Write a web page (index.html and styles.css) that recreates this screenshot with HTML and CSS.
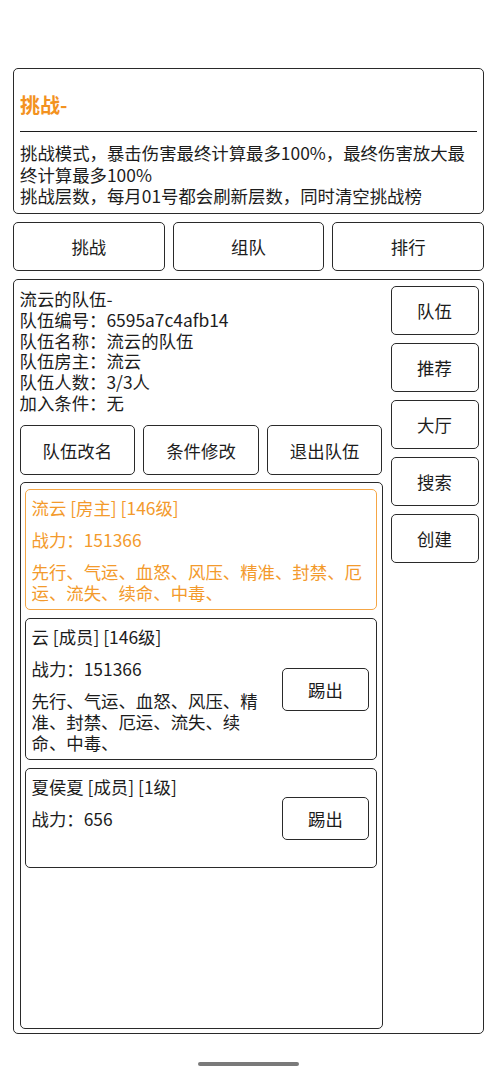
FILE: index.html
```html
<!DOCTYPE html>
<html lang="zh-CN">
<head>
<meta charset="utf-8">
<title>挑战</title>
<link rel="stylesheet" href="styles.css">
</head>
<body>
<div class="page">
  <section class="intro">
    <h1 class="intro-title">挑战-</h1>
    <div class="intro-rule"></div>
    <p class="intro-text">挑战模式，暴击伤害最终计算最多100%，最终伤害放大最终计算最多100%<br>挑战层数，每月01号都会刷新层数，同时清空挑战榜</p>
  </section>

  <nav class="tabs">
    <div class="btn tab">挑战</div>
    <div class="btn tab">组队</div>
    <div class="btn tab">排行</div>
  </nav>

  <section class="main">
    <div class="left">
      <p class="info">流云的队伍-<br>队伍编号：6595a7c4afb14<br>队伍名称：流云的队伍<br>队伍房主：流云<br>队伍人数：3/3人<br>加入条件：无</p>
      <div class="actions">
        <div class="btn action">队伍改名</div>
        <div class="btn action">条件修改</div>
        <div class="btn action">退出队伍</div>
      </div>
      <div class="list">
        <div class="card card-owner">
          <div class="card-body">
            <div class="line">流云 [房主] [146级]</div>
            <div class="line">战力：151366</div>
            <div class="line">先行、气运、血怒、风压、精准、封禁、厄运、流失、续命、中毒、</div>
          </div>
        </div>
        <div class="card">
          <div class="card-body narrow">
            <div class="line">云 [成员] [146级]</div>
            <div class="line">战力：151366</div>
            <div class="line">先行、气运、血怒、风压、精准、封禁、厄运、流失、续命、中毒、</div>
          </div>
          <div class="btn kick">踢出</div>
        </div>
        <div class="card">
          <div class="card-body narrow">
            <div class="line">夏侯夏 [成员] [1级]</div>
            <div class="line">战力：656</div>
            <div class="line empty"></div>
          </div>
          <div class="btn kick">踢出</div>
        </div>
      </div>
    </div>
    <div class="side">
      <div class="btn side-btn">队伍</div>
      <div class="btn side-btn">推荐</div>
      <div class="btn side-btn">大厅</div>
      <div class="btn side-btn">搜索</div>
      <div class="btn side-btn">创建</div>
    </div>
  </section>

  <div class="home-indicator"></div>
</div>
</body>
</html>
```

FILE: styles.css
```css
* {
  box-sizing: border-box;
}

html, body {
  margin: 0;
  padding: 0;
  background: #ffffff;
}

body {
  font-family: "Noto Sans CJK SC", "Noto Sans", sans-serif;
  font-size: 17.4px;
  color: #1c1c1c;
}

.page {
  padding: 68px 14px 0 13px;
}

.btn {
  border: 1.5px solid #2a2a2a;
  border-radius: 5px;
  display: flex;
  align-items: center;
  justify-content: center;
  background: #fff;
}

/* intro box */
.intro {
  border: 1.5px solid #2a2a2a;
  border-radius: 5px;
  padding: 0 6px 5px;
  height: 146px;
}

.intro-title {
  margin: 16px 0 0;
  height: 40px;
  line-height: 40px;
  font-size: 20px;
  font-weight: 700;
  color: #f3921f;
}

.intro-rule {
  margin: 6px 0 10px;
  border-top: 1.5px solid #1c1c1c;
}

.intro-text {
  margin: 0;
  line-height: 21.5px;
}

/* tabs */
.tabs {
  display: grid;
  grid-template-columns: 1fr 1fr 1fr;
  gap: 8px;
  margin-top: 8px;
}

.tab {
  height: 49px;
}

/* main panel */
.main {
  margin-top: 8px;
  height: 755px;
  border: 1.5px solid #2a2a2a;
  border-radius: 5px;
  padding: 5.5px 4.5px 4.5px 5.5px;
  display: flex;
  gap: 8px;
}

.left {
  flex: 1;
  display: flex;
  flex-direction: column;
  min-width: 0;
}

.info {
  margin: 3.5px 0 0;
  line-height: 20.8px;
}

.actions {
  display: grid;
  grid-template-columns: 1fr 1fr 1fr;
  gap: 8px;
  margin-top: 11.5px;
}

.action {
  height: 50px;
}

.list {
  margin-top: 7px;
  flex: 1;
  border: 1.5px solid #2a2a2a;
  border-radius: 5px;
  padding: 5.5px 4.5px 4.5px 4.5px;
  display: flex;
  flex-direction: column;
  gap: 8px;
}

.card {
  border: 1.5px solid #2a2a2a;
  border-radius: 5px;
  padding: 7px 7px 6px 5.5px;
  display: flex;
  align-items: center;
}

.card-owner {
  border-color: #f5a645;
  color: #f39a2c;
}

.card-body {
  flex: 1;
  display: flex;
  flex-direction: column;
  gap: 11px;
}

.card-body.narrow {
  flex: 0 0 240px;
  margin-right: 9px;
}

.line {
  line-height: 21px;
}

.line.empty {
  height: 21px;
}

.kick {
  width: 87px;
  height: 43px;
  margin-left: auto;
}

/* side buttons */
.side {
  width: 88px;
  display: flex;
  flex-direction: column;
  gap: 8px;
}

.side-btn {
  height: 49px;
}

.home-indicator {
  width: 101px;
  height: 4px;
  border-radius: 2px;
  background: #7a7a7a;
  margin: 28px auto 0 185px;
}
```
